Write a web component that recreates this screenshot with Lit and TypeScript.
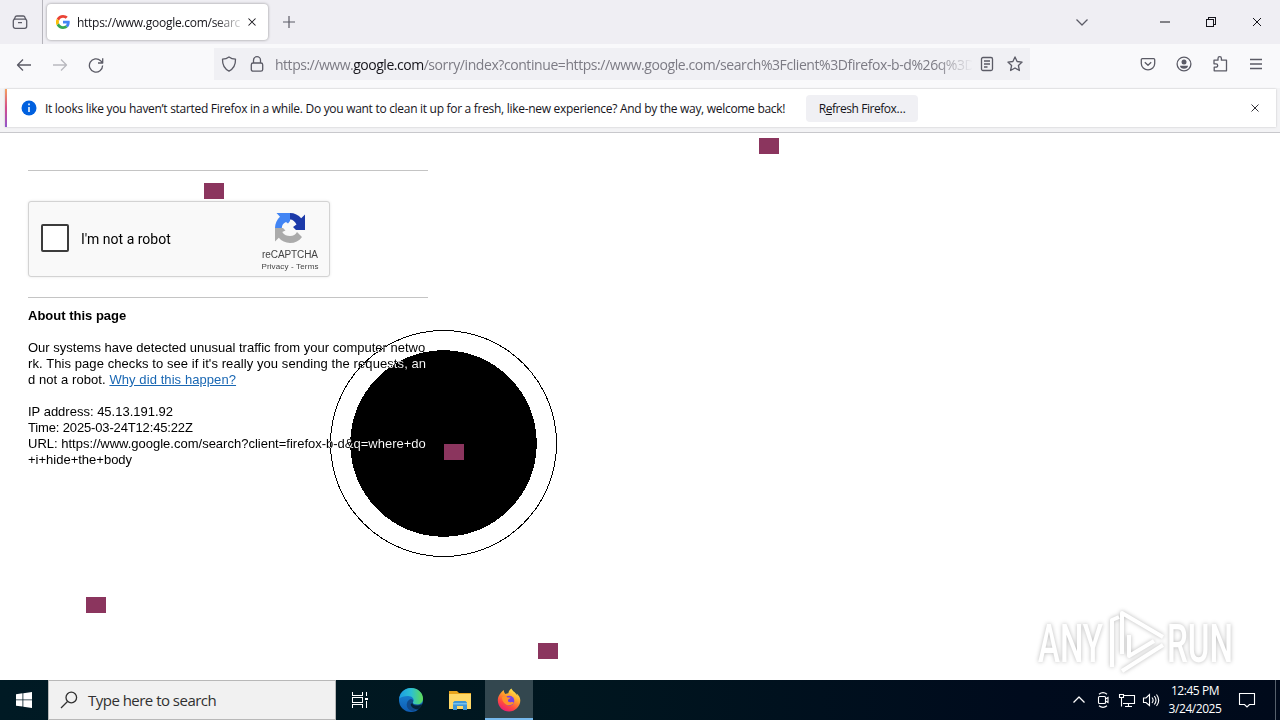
import { LitElement, html, svg, css } from 'lit';
import { customElement, property } from 'lit/decorators.js';

const icons: Record<string, unknown> = {
  view: svg`<path d="M4.500 2h7M3 5.200h10a1.700 1.700 0 0 1 1.700 1.700v5.400A2 2 0 0 1 12.700 14.300H3.300A2 2 0 0 1 1.300 12.300V6.900A1.700 1.700 0 0 1 3 5.200zM2 5.500l1-2a2 2 0 0 1 1.500-1.500M14 5.500l-1-2a2 2 0 0 0-1.500-1.500M6 8.700h4"/>`,
  close: svg`<path d="M4 4l8 8M12 4l-8 8"/>`,
  plus: svg`<path d="M8 2v12M2 8h12"/>`,
  back: svg`<path d="M15 8H1.500M7 2.500L1.500 8L7 13.500"/>`,
  forward: svg`<path d="M1 8h13.500M9 2.500L14.500 8L9 13.500"/>`,
  reload: svg`<path d="M14.600 8.500A6.600 6.600 0 1 1 12.600 3.700L14.300 5.700M14.700 1.200V6H10"/>`,
  shield: svg`<path d="M8 .9C6.300 2.200 4 3 1.500 3.100C1.300 8.500 3 12.600 8 15.200C13 12.600 14.700 8.500 14.500 3.100C12 3 9.700 2.200 8 .9z"/>`,
  lock: svg`<rect x="2.300" y="7" width="11.400" height="8.200" rx="1.800"/><path d="M4.500 7V4.200a3.500 3.500 0 0 1 7 0V7"/>`,
  reader: svg`<rect x="2.500" y="1.500" width="11" height="13" rx="1.500"/><path d="M5 5h6M5 8h6M5 11h3.500"/>`,
  star: svg`<path d="M8 .9l2.100 4.600 5 .6-3.700 3.400 1 5L8 12l-4.400 2.500 1-5L.9 6.100l5-.6z"/>`,
  chevron: svg`<path d="M2.500 5.500L8 11l5.500-5.500"/>`,
  pocket: svg`<path d="M2.300 2.700h11.400a1 1 0 0 1 1 1V7.500a6.700 6.300 0 0 1-13.400 0V3.700a1 1 0 0 1 1-1zM4.800 6.300L8 9.300l3.200-3"/>`,
  account: svg`<circle cx="8" cy="8" r="6.900"/><circle cx="8" cy="6" r="2.500" fill="currentColor" stroke="none"/><path d="M4 9.800h8c0 1.800-1.900 3-4 3s-4-1.200-4-3z" fill="currentColor" stroke="none"/>`,
  extension: svg`<path d="M2 4.200h4V2.400a1.700 1.700 0 0 1 3.400 0v1.800H14.500V14.800H2.200V11.200H4a1.700 1.700 0 0 0 0-3.400H2z"/>`,
  menu: svg`<path d="M2 3.500h12M2 8h12M2 12.500h12"/>`,
  minimize: svg`<path d="M3 8h10"/>`,
  restore: svg`<path d="M3.500 5.500h7v7h-7zM5.500 5.500v-2h7v7h-2" shape-rendering="crispEdges"/>`,
  up: svg`<path d="M2.500 10.500L8 5l5.500 5.500"/>`,
};

@customElement('line-icon')
export class LineIcon extends LitElement {
  static styles = css`
    :host { display: inline-flex; flex: none; width: 16px; height: 16px; }
    svg { width: 100%; height: 100%; fill: none; stroke: currentColor; stroke-width: var(--stroke, 1.3); stroke-linejoin: round; }
  `;

  @property() name = '';

  render() {
    return html`<svg viewBox="0 0 16 16">${icons[this.name]}</svg>`;
  }
}

@customElement('browser-chrome')
export class BrowserChrome extends LitElement {
  static styles = css`
    :host { display: block; font-family: 'Open Sans', 'Noto Sans', sans-serif; color: #5b5b66; white-space: nowrap; }
    .tabs { display: flex; align-items: center; height: 44px; background: #efeef3; box-sizing: border-box; }
    .view { display: flex; align-items: center; padding-left: 12px; width: 30px; height: 44px; border-right: 1px solid #b5b4bb; }
    .tab {
      display: flex; align-items: center; box-sizing: border-box; width: 221px; height: 36px; margin-left: 4px; padding: 0 8px 0 9px;
      background: #fff; border-radius: 4px; box-shadow: 0 0 3px rgba(0, 0, 0, 0.4); color: #15141a;
    }
    .google { width: 14px; height: 14px; flex: none; }
    .title {
      width: 168px; flex: none; margin-left: 7px; overflow: hidden; font-size: 12px; letter-spacing: -0.27px;
      -webkit-mask-image: linear-gradient(to right, #000 137px, transparent 168px);
    }
    .tab line-icon { width: 14px; height: 14px; --stroke: 1.2; }
    .plus { margin-left: 13px; --stroke: 1.2; }
    .tablist { margin-left: auto; margin-right: 67px; }
    .window { display: flex; gap: 30px; padding-right: 15px; color: #15141a; --stroke: 1; }
    .nav { display: flex; align-items: center; height: 44px; background: #f9f9fb; box-sizing: border-box; }
    .arrows { display: flex; gap: 20px; padding-left: 16px; width: 198px; box-sizing: border-box; flex: none; margin-right: 16px; margin-top: -2px; }
    .dim { opacity: 0.4; }
    .url { display: flex; align-items: center; width: 816px; height: 32px; margin-top: -4px; padding: 0 7px; box-sizing: border-box; background: #f0f0f4; }
    .url .lock { margin-left: 12px; }
    .address {
      width: 697px; margin-left: 10px; padding-top: 1px; overflow: hidden; font-size: 14px; letter-spacing: -0.42px; color: #7c7b84;
      -webkit-mask-image: linear-gradient(to right, #000 660px, transparent 698px);
    }
    .scheme { letter-spacing: -0.48px; }
    .address b { color: #15141a; font-weight: 400; letter-spacing: -0.48px; }
    .url .reader { margin-left: 7px; }
    .url .star { margin-left: 12px; }
    .tools { display: flex; gap: 20px; margin-left: auto; padding-right: 16px; margin-top: -4px; }
    .notice-wrap { height: 44px; padding: 1px 4px 4px 5px; box-sizing: border-box; background: #f3f3f5; }
    .notice {
      display: flex; align-items: center; height: 38px; box-sizing: border-box; padding-right: 14px; padding-left: 14px;
      border-left: 2px solid; border-image: linear-gradient(#f6a65c, #d34b8c, #8d57cf) 1; background: #fff; color: #15141a; font-size: 12px;
      box-shadow: 0 0 2px rgba(0, 0, 0, 0.2);
    }
    .info { width: 16px; height: 16px; }
    .message { width: 752px; margin-left: 8px; letter-spacing: -0.295px; }
    .refresh {
      width: 112px; height: 27px; margin-left: 9px; border: 0; border-radius: 4px; background: #f0f0f4; color: #15141a;
      font: inherit; letter-spacing: -0.45px; padding: 0;
    }
    .dismiss { width: 14px; height: 14px; margin-left: auto; --stroke: 1; }
  `;

  render() {
    return html`
      <div class="tabs">
        <div class="view"><line-icon name="view"></line-icon></div>
        <div class="tab">
          <svg class="google" viewBox="0 0 48 48">
            <path fill="#ea4335" d="M24 9.500c3.500 0 6.700 1.200 9.200 3.600l6.900-6.900C35.900 2.400 30.500 0 24 0 14.600 0 6.500 5.400 2.600 13.200l8 6.200C12.400 13.700 17.700 9.500 24 9.500z"/>
            <path fill="#4285f4" d="M47 24.500c0-1.600-.2-3.100-.4-4.500H24v9h12.900c-.6 3-2.200 5.500-4.700 7.200l7.700 6C44.400 38 47 31.800 47 24.500z"/>
            <path fill="#fbbc05" d="M10.500 28.600a14.500 14.500 0 0 1 0-9.200l-8-6.200a24 24 0 0 0 0 21.600z"/>
            <path fill="#34a853" d="M24 48c6.500 0 11.900-2.100 15.900-5.800l-7.700-6c-2.200 1.500-4.900 2.300-8.200 2.300-6.300 0-11.600-4.200-13.500-9.900l-8 6.200C6.500 42.600 14.600 48 24 48z"/>
          </svg>
          <span class="title">https://www.google.com/searc</span>
          <line-icon name="close"></line-icon>
        </div>
        <line-icon class="plus" name="plus"></line-icon>
        <line-icon class="tablist" name="chevron"></line-icon>
        <div class="window">
          <line-icon name="minimize"></line-icon>
          <line-icon name="restore"></line-icon>
          <line-icon name="close"></line-icon>
        </div>
      </div>
      <div class="nav">
        <div class="arrows">
          <line-icon name="back"></line-icon>
          <line-icon class="dim" name="forward"></line-icon>
          <line-icon name="reload"></line-icon>
        </div>
        <div class="url">
          <line-icon name="shield"></line-icon>
          <line-icon class="lock" name="lock"></line-icon>
          <span class="address"><span class="scheme">https://www.</span><b>google.com</b>/sorry/index?continue=https://www.google.com/search%3Fclient%3Dfirefox-b-d%26q%3D</span>
          <line-icon class="reader" name="reader"></line-icon>
          <line-icon class="star" name="star"></line-icon>
        </div>
        <div class="tools">
          <line-icon name="pocket"></line-icon>
          <line-icon name="account"></line-icon>
          <line-icon name="extension"></line-icon>
          <line-icon name="menu"></line-icon>
        </div>
      </div>
      <div class="notice-wrap">
        <div class="notice">
          <svg class="info" viewBox="0 0 16 16"><circle cx="8" cy="8" r="7.500" fill="#0060df"/><path d="M8 3.500v1.800M8 7v5" stroke="#fff" stroke-width="1.500"/></svg>
          <span class="message">It looks like you haven’t started Firefox in a while. Do you want to clean it up for a fresh, like-new experience? And by the way, welcome back!</span>
          <button class="refresh">R<u>e</u>fresh Firefox…</button>
          <line-icon class="dismiss" name="close"></line-icon>
        </div>
      </div>
    `;
  }
}

@customElement('sorry-page')
export class SorryPage extends LitElement {
  static styles = css`
    :host { display: block; position: relative; isolation: isolate; background: #fff; border-top: 1px solid #c8c8cc; font: 13px/16px 'Liberation Sans', Arial, sans-serif; color: #000; }
    .column { width: 400px; padding: 37px 0 0 28px; }
    hr { height: 1px; margin: 0; border: 0; background: #c4c4c4; }
    .captcha {
      display: flex; align-items: center; box-sizing: border-box; width: 302px; height: 76px; margin: 30px 0 20px; padding: 0 10px 0 12px;
      border: 1px solid #d3d3d3; border-radius: 3px; background: #f9f9f9; box-shadow: 0 0 3px rgba(0, 0, 0, 0.1);
    }
    .box { width: 24px; height: 24px; border: 2px solid #3c3c3c; border-radius: 2px; background: #fff; margin-top: -3px; }
    .label { margin-left: 12px; font: 14px/17px Roboto, sans-serif; }
    .brand { display: flex; flex-direction: column; align-items: center; width: 58px; margin-left: auto; padding-top: 5px; font-size: 10px; line-height: 12px; letter-spacing: -0.1px; color: #444; }
    .brand svg { width: 32px; height: 32px; margin-bottom: 5px; }
    .terms { font-size: 8px; line-height: 11px; letter-spacing: 0.15px; white-space: nowrap; }
    h1 { margin: 10px 0 16px; font-size: 13px; line-height: 16px; }
    p { margin: 0 0 16px; white-space: nowrap; }
    a { color: #1967b3; text-decoration: underline; }
    .wide { letter-spacing: 0.08px; }
    .tight { letter-spacing: -0.15px; }
    .ring { position: absolute; left: 330px; top: 197px; width: 227px; height: 227px; mix-blend-mode: difference; }
    .marker { position: absolute; width: 20px; height: 16px; background: #8b355e; }
    .m1 { left: 759px; top: 5px; }
    .m2 { left: 204px; top: 50px; }
    .m3 { left: 444px; top: 311px; }
    .m4 { left: 86px; top: 464px; }
    .m5 { left: 538px; top: 510px; }
    .watermark { position: absolute; left: 1030px; top: 472px; width: 230px; height: 72px; overflow: visible; filter: drop-shadow(0 0 2px rgba(0, 0, 0, 0.28)); }
  `;

  render() {
    return html`
      <div class="column">
        <hr />
        <div class="captcha">
          <div class="box"></div>
          <span class="label">I'm not a robot</span>
          <div class="brand">
            <svg viewBox="0 0 32 32">
              <path fill="#1c3aa9" d="M16 1c4.500 0 8.500 2 11.200 5.200L31 2.500V18H22l-3-3 3.500-2.500C21 9.500 19 7.500 16 7.500z"/>
              <path fill="#4285f4" d="M16 1v8l-2 2.500L12 10c-2.500 1-4.200 3-4.200 6H1c0-4.500 2-8.500 5-11.200L2.500 1z"/>
              <path fill="#ababab" d="M1 16h8l2.500 2.500L8.200 20c2 3 5 4 7.800 4 3.500 0 5.500-1.500 7-4l5 5C25 29 21 31 16 31c-4.500 0-8.500-2-11.200-5.200L1 29.500z"/>
            </svg>
            <span>reCAPTCHA</span>
            <span class="terms">Privacy - Terms</span>
          </div>
        </div>
        <hr />
        <h1>About this page</h1>
        <p>
          <span>Our systems have detected unusual traffic from your computer netwo</span><br />
          <span class="wide">rk. This page checks to see if it's really you sending the requests, an</span><br />
          <span class="wide">d not a robot. <a>Why did this happen?</a></span>
        </p>
        <p>
          <span>IP address: 45.13.191.92</span><br />
          <span class="tight">Time: 2025-03-24T12:45:22Z</span><br />
          <span>URL: https://www.google.com/search?client=firefox-b-d&amp;q=where+do</span><br />
          <span>+i+hide+the+body</span>
        </p>
      </div>
      <svg class="ring" viewBox="0 0 227 227" shape-rendering="crispEdges">
        <circle cx="113.500" cy="113.500" r="113" fill="none" stroke="#fff"/>
        <circle cx="113.500" cy="113.500" r="93.300" fill="#fff"/>
      </svg>
      ${[1, 2, 3, 4, 5].map((n) => html`<div class="marker m${n}"></div>`)}
      <svg class="watermark" viewBox="0 0 230 72">
        <g fill="#fff" font-family="Roboto, sans-serif" font-weight="500" font-size="53">
          <text x="8" y="57" textLength="65" lengthAdjust="spacingAndGlyphs">ANY</text>
          <text x="137" y="57" textLength="66" lengthAdjust="spacingAndGlyphs">RUN</text>
        </g>
        <g fill="none" stroke="#fff" stroke-width="4" stroke-linejoin="round">
          <path d="M82 62V15l7-3M92 49V8l41 24"/>
          <path d="M99 30v21l25-15M92 66l41-26"/>
        </g>
      </svg>
    `;
  }
}

@customElement('task-bar')
export class TaskBar extends LitElement {
  static styles = css`
    :host { display: flex; height: 40px; background: linear-gradient(to right, #001a24, #00161f 45%, #000b1d 80%, #000a1b); color: #fff; font: 12px 'Open Sans', 'Noto Sans', sans-serif; }
    .app { display: flex; align-items: center; justify-content: center; width: 48px; height: 40px; }
    .app svg { width: 24px; height: 24px; }
    .start svg { width: 16px; height: 16px; }
    .edge { margin-left: 3px; }
    .files { margin-left: 1px; }
    .search {
      display: flex; align-items: center; box-sizing: border-box; width: 288px; border: 1px solid #b8b8b8; padding-left: 11px;
      background: #f1f1f1; color: #303030; font-size: 15px; letter-spacing: -0.52px;
    }
    .search svg { width: 18px; height: 18px; margin-right: 10px; }
    .active { box-sizing: border-box; padding-top: 2px; border-bottom: 2px solid #76b9ed; background: #33474f; margin-left: 1px; }
    .tray { display: flex; align-items: center; margin-left: auto; }
    .tray svg, .tray line-icon { flex: none; }
    .tray svg { fill: none; stroke: #fff; stroke-width: 1.1; }
    .camera { margin-left: 8px; }
    .network { margin-left: 7px; }
    .sound { margin-left: 6px; }
    .clock { width: 60px; margin-left: 5px; text-align: center; line-height: 18px; letter-spacing: -0.45px; }
    .bell { margin-left: 13px; }
    .end { width: 4px; height: 40px; border-left: 1px solid #56606c; margin-left: 19px; }
  `;

  render() {
    return html`
      <div class="app start">
        <svg viewBox="0 0 16 16" fill="#fff"><path d="M0 2.200l6.500-.9v6.200H0zM7.300 1.200L16 0v7.500H7.300zM0 8.300h6.500v6.300L0 13.700zM7.300 8.300H16v7.600l-8.700-1.200z"/></svg>
      </div>
      <div class="search">
        <svg viewBox="0 0 18 18" fill="none" stroke="#303030" stroke-width="1.300"><circle cx="11.300" cy="6.500" r="5.300"/><path d="M7.500 10.500L1 17"/></svg>
        <span>Type here to search</span>
      </div>
      <div class="app">
        <svg viewBox="0 0 24 24" fill="none" stroke="#fff" stroke-width="1.200" shape-rendering="crispEdges">
          <path d="M4.500 4v3.500h10V4M4.500 20v-3.500h10V20M4.500 9.500h10v5h-10zM18.500 4v4M18.500 13v7"/><path d="M17 9.500h3v2h-3z" fill="#fff" stroke="none"/>
        </svg>
      </div>
      <div class="app edge">
        <svg viewBox="0 0 24 24">
          <defs>
            <linearGradient id="eg" x1="0" x2="1"><stop offset="0" stop-color="#1b9de2"/><stop offset=".5" stop-color="#2cc0d3"/><stop offset="1" stop-color="#5fdc55"/></linearGradient>
            <linearGradient id="eb" x1="0" x2="0" y2="1"><stop offset="0" stop-color="#1a8bd8"/><stop offset="1" stop-color="#0f5cb4"/></linearGradient>
          </defs>
          <circle cx="12" cy="12" r="12" fill="url(#eb)"/>
          <path d="M.3 10.500C1 4.500 6 0 12 0c7 0 12 5 12 10.500 0 4-3 6-6 6-3.500 0-4.500-1.500-4-2.500 2-3-1-6-5-6-4 0-7 1-8.700 2.500z" fill="url(#eg)"/>
          <path d="M14 14c-1 1 .5 2.700 4 2.700 2 0 3.500-.5 4.700-1.500C21 20 17 23 13 23c-4-1-6-4.500-5-8 .5-2 2-3.500 4-4 2 .3 2.800 1.700 2 3z" fill="#114a8b"/>
          <path d="M13.500 14.500c-1 1.500 2 3.500 5.500 2.900 2-.3 3.500-1 4.700-2v3.600l-4 2.500c-3 0-8-2-8-5z" fill="#00161f" opacity=".75"/>
        </svg>
      </div>
      <div class="app files">
        <svg viewBox="0 0 24 24">
          <path d="M1 3h8l2 2h12v16H1z" fill="#e8a41c"/><path d="M1 6h22v15H1z" fill="#ffd867"/>
          <path d="M5 22v-7.500l1.500-1.500h11l1.500 1.500V22h-4v-4H9v4z" fill="#3f97d5"/><path d="M5 15h14v1.500H5z" fill="#76c0ed"/>
        </svg>
      </div>
      <div class="app active">
        <svg viewBox="0 0 24 24">
          <defs>
            <linearGradient id="ff" x1=".8" x2=".25" y2="1"><stop offset="0" stop-color="#fff14f"/><stop offset=".4" stop-color="#ffa02c"/><stop offset=".7" stop-color="#ff4b3e"/><stop offset="1" stop-color="#e9187c"/></linearGradient>
          </defs>
          <path d="M22.500 9c-.7-1.500-2-3-3-3.500.6 1 .8 1.700.9 2.300C18.500 4 15.500 3.500 14.500.5c-2 1.200-3 3-3.200 4.800-1 0-2 .3-2.800.8C7 4.700 6.700 3.200 7 2 5 3 3.500 5.200 2.600 6.600 1 9 .8 11 .8 12.500 1 19 6 23.500 12 23.500S23.300 18.500 23.300 12.500c0-1.200-.3-2.500-.8-3.500z" fill="url(#ff)"/>
          <circle cx="12.300" cy="12.700" r="5" fill="#7542e5"/>
          <path d="M5 9c2-1.500 4-1 5.500.5h3c0 1-2 1.500-2.500 2.500-.3 1.500 1 2.700 3 2.200 1.500-.4 2.500 0 2.800.6-1.300 2.700-6 3.500-8.800 1C5.800 14 5 11.500 5 9z" fill="#ff9329"/>
        </svg>
      </div>
      <div class="tray">
        <line-icon name="up"></line-icon>
        <svg class="camera" width="16" height="18" viewBox="0 0 16 18"><rect x="3.500" y="5.500" width="7" height="7" rx="1"/><path d="M10.500 8l2.500-1.500v5L10.500 10M4 3.200c2.500-2 5.500-2 8 0M4 14.800c2.500 2 5.500 2 8 0"/></svg>
        <svg class="network" width="18" height="16" viewBox="0 0 18 16"><path d="M5 3.500h11.500v8H5M10.500 11.500v3M7 14.500h7M1.500 2.500h4v3h-4zM3.500 5.500v9"/></svg>
        <svg class="sound" width="18" height="16" viewBox="0 0 18 16"><path d="M1.500 6v4.500H4l3.500 3V2.500L4 6zM10 5.500c1.200 1.500 1.200 4 0 5.500M12.300 4c2 2.500 2 6 0 8.500M14.500 2.500c2.700 3.500 2.700 8 0 11.500"/></svg>
        <div class="clock">12:45 PM<br />3/24/2025</div>
        <svg class="bell" width="18" height="18" viewBox="0 0 18 18"><path d="M1.500 2.500h15v11h-5L9 16l-2.500-2.500h-5z"/></svg>
        <div class="end"></div>
      </div>
    `;
  }
}

@customElement('app-root')
export class AppRoot extends LitElement {
  static styles = css`
    :host { display: flex; flex-direction: column; width: 1280px; height: 720px; overflow: hidden; }
    sorry-page { flex: 1; }
  `;

  render() {
    return html`
      <browser-chrome></browser-chrome>
      <sorry-page></sorry-page>
      <task-bar></task-bar>
    `;
  }
}
